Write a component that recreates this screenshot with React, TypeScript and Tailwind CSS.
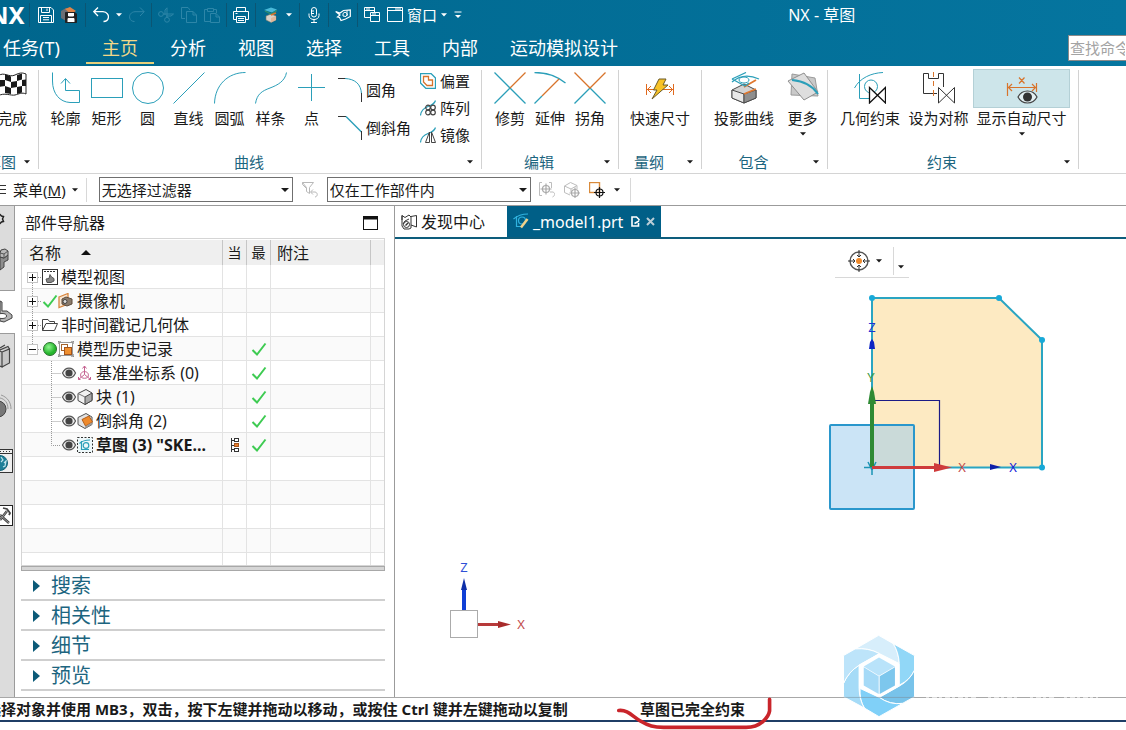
import React from 'react';

type Kids = { children?: React.ReactNode };

const Caret = ({ className = '', big }: { className?: string; big?: boolean }) => (
  <svg className={`shrink-0 ${className}`} width={big ? 8 : 6} height="4" viewBox={big ? '0 0 8 4' : '0 0 6 4'} fill="currentColor" aria-hidden="true">
    <path d={big ? 'M0 0H8L4 4Z' : 'M0 0.3H6L3 3.6Z'} />
  </svg>
);

const Ico = ({ s = 16, w, h, vb, children, className = '' }: Kids & { s?: number; w?: number; h?: number; vb?: string; className?: string }) => (
  <svg
    className={`shrink-0 ${className}`}
    width={w ?? s}
    height={h ?? s}
    viewBox={vb ?? `0 0 ${w ?? s} ${h ?? s}`}
    fill="none"
    stroke="currentColor"
    strokeWidth="1"
    aria-hidden="true"
  >
    {children}
  </svg>
);

const CYAN = '#2b9fb9';
const ORANGE = '#d8742c';

/* ---------- title bar ---------- */

const TitleGroup = ({ w, children, last }: Kids & { w: string; last?: boolean }) => (
  <div className={`flex h-6 items-center justify-center gap-[7px] ${w} ${last ? '' : 'border-r border-[#0b5573]'}`}>{children}</div>
);

const TB = ({ label, children, off }: Kids & { label: string; off?: boolean }) => (
  <button type="button" aria-label={label} disabled={off} className={`flex items-center ${off ? 'text-[#2d86a8]' : 'text-white'}`}>
    {children}
  </button>
);

function TitleBar() {
  return (
    <div className="flex h-8 items-center pb-[2px]">
      <div className="flex w-[70%] items-center">
        <div className="flex w-[30px] items-center overflow-hidden border-r border-[#0b5573]">
          <span className="-ml-[11px] text-[24px] leading-6 font-bold">NX</span>
        </div>
        <TitleGroup w="w-[56px]">
          <TB label="保存">
            <Ico>
              <path d="M0.5 0.5H13L15.5 3V15.5H0.5ZM3.5 0.5V5.5H11.5V0.5M9 1.5V4M2.5 15V8.5H13.5V15M5 10.5H11M5 12.8H11" />
            </Ico>
          </TB>
          <TB label="全部保存">
            <Ico>
              <path d="M0 4L5 1L10 3V12L5 14L0 11Z" fill="#6b6f75" stroke="none" />
              <path d="M4 2L9 0L15 4L10 7Z" fill="#e08447" stroke="none" />
              <path d="M4.5 5.5H14L15.5 7V15.5H4.5Z" fill="#222" stroke="#222" />
              <path d="M7.5 6V9H12.5V6M7 15V11.5H13V15" fill="#fff" stroke="#fff" />
            </Ico>
          </TB>
        </TitleGroup>
        <TitleGroup w="w-[66px]">
          <TB label="撤销">
            <Ico>
              <path d="M5 0.5L0.8 4.7L5 9M1 4.7H10C14 5 16 8 15.3 11C14.8 13.3 13 14.5 10.5 14.5" strokeWidth="1.3" />
            </Ico>
          </TB>
          <TB label="撤销列表">
            <Caret />
          </TB>
          <TB label="重做" off>
            <Ico>
              <path d="M11 0.5L15.2 4.7L11 9M15 4.7H6C2 5 0 8 0.7 11C1.2 13.3 3 14.5 5.5 14.5" />
            </Ico>
          </TB>
        </TitleGroup>
        <TitleGroup w="w-[75px]">
          <TB label="剪切" off>
            <Ico>
              <circle cx="3" cy="7" r="2.4" />
              <circle cx="9" cy="12.8" r="2.4" />
              <path d="M5.5 7H15.5L13 9H8M9 10.4V0.8L7 3V8" />
            </Ico>
          </TB>
          <TB label="复制" off>
            <Ico>
              <path d="M4 11.5H0.5V0.5H7L9 3M5.5 4.5H12L15.5 8V15.5H5.5ZM12 4.5V8H15.5" />
            </Ico>
          </TB>
          <TB label="粘贴" off>
            <Ico>
              <path d="M6 14.5H0.5V2.5H3.5M9.5 2.5H12.5V6M3.5 1.5H9.5V4.5H3.5ZM6.5 6.5H12L15.5 10V15.5H6.5ZM12 6.5V10H15.5" />
            </Ico>
          </TB>
        </TitleGroup>
        <TitleGroup w="w-[29px]">
          <TB label="打印">
            <Ico>
              <path d="M3.5 4V0.5H12.5V4M3 12.5H0.5V4.5H15.5V12.5H13M3.5 9.5H12.5V15.5H3.5ZM2.5 6.5H4.5M5 11.5H11M5 13.5H11" />
            </Ico>
          </TB>
        </TitleGroup>
        <TitleGroup w="w-[44px]">
          <TB label="命令查找">
            <Ico>
              <path d="M3 9L8 7L13 9V13L8 15.5L3 13Z" fill="#d9d2c8" stroke="#776" strokeWidth="0.6" />
              <path d="M8 11L13 9V13L8 15.5Z" fill="#e0b79a" stroke="none" />
              <path d="M1 3L8 0.5L14 2.5L9 5.5Z" fill="#49b9d8" stroke="none" />
              <path d="M2 4L8 7L14 3.5" stroke="#2d8f6f" strokeWidth="1.3" />
              <path d="M8 8L13 6" stroke="#d8742c" strokeWidth="1.6" />
            </Ico>
          </TB>
          <TB label="更多命令">
            <Caret />
          </TB>
        </TitleGroup>
        <TitleGroup w="w-[29px]">
          <TB label="语音">
            <Ico>
              <rect x="5.5" y="0.5" width="5" height="9.5" rx="2.5" />
              <path d="M3 6.5V8.5C3 11 5.2 12.5 8 12.5S13 11 13 8.5V6.5M8 12.5V15.5M5 15.5H11M5.5 4H8M5.5 6.5H8" />
            </Ico>
          </TB>
        </TitleGroup>
        <TitleGroup w="w-[29px]">
          <TB label="触控">
            <Ico>
              <path d="M0.7 4.5L5 6L8.500 3.500L15.300 2.800V9.500L10.500 12L6 13.500L4.500 10.500L2.500 10L5 8Z" strokeWidth="1.200" />
              <path d="M8 6.500L10 5L12.500 7L11 9.500L8 9ZM12 3V9" />
            </Ico>
          </TB>
        </TitleGroup>
        <div className="flex items-center gap-[7px] pl-[6px]">
          <TB label="切换窗口">
            <Ico>
              <path d="M6 10.5H0.5V0.5H10.5V5M0.5 3.5H10.5M2 2H6M6.5 5.5H15.5V14.5H6.5ZM6.5 8.5H15.5M8 7H12" />
            </Ico>
          </TB>
          <button type="button" className="flex items-center gap-1 text-[15px] leading-5">
            <Ico>
              <path d="M0.5 0.5H15.5V14.5H0.5ZM0.5 3.5H15.5M8 2H14" />
            </Ico>
            窗口
            <Caret />
          </button>
          <TB label="自定义工具条">
            <Ico w={8} h={8}>
              <path d="M0.5 1H7.5" />
              <path d="M1 4H7L4 7Z" fill="currentColor" stroke="none" />
            </Ico>
          </TB>
        </div>
      </div>
      <h1 className="text-[16px] leading-6">NX - 草图</h1>
    </div>
  );
}

const TABS = ['主页', '分析', '视图', '选择', '工具', '内部', '运动模拟设计'];

function MenuTabs() {
  return (
    <div className="flex h-[34px] items-start justify-between">
      <nav className="flex text-[18px] leading-8">
        <a href="#task" className="w-[86px] pl-[3px]">任务(T)</a>
        {TABS.map((t, i) => (
          <a
            key={t}
            href={`#tab${i}`}
            className={`h-8 border-b-2 px-4 ${i === 0 ? 'border-[#e8cf7a] text-[#f2d888]' : 'border-transparent'}`}
          >
            {t}
          </a>
        ))}
      </nav>
      <input
        aria-label="查找命令"
        placeholder="查找命令"
        className="mt-[3px] h-[26px] w-[58px] border border-r-0 border-[#8a8a8a] bg-white px-px text-[15px] text-black placeholder:text-[#a3a3a3]"
      />
    </div>
  );
}

/* ---------- ribbon ---------- */

const Tool = ({ label, w, children, drop, on }: Kids & { label: string; w: string; drop?: boolean; on?: boolean }) => (
  <button type="button" aria-pressed={on} className={`flex flex-col items-center ${w}`}>
    <span className={`flex h-[39px] w-full items-start justify-center ${on ? 'border border-[#b4d0d6] bg-[#cde5ea] pt-[2px]' : 'pt-[3px]'}`}>{children}</span>
    <span className="text-[15px] leading-5 whitespace-nowrap">{label}</span>
    {drop && <Caret className="mt-1" />}
  </button>
);

const Group = ({ name, children, pad = 'px-2' }: Kids & { name: string; pad?: string }) => (
  <section className="flex flex-col">
    <div className={`flex h-[83px] items-start ${pad}`}>{children}</div>
    <div className="flex h-5 items-center text-[15px] leading-5">
      <span className="flex-1 text-center text-[#1c6580]">{name}</span>
      <button type="button" aria-label={`${name}选项`} className="flex w-[22px] justify-center">
        <Caret />
      </button>
    </div>
  </section>
);

const Sep = () => <div className="mt-px mb-[3px] w-px shrink-0 bg-[#d2d2d2]" />;

const SmallTool = ({ label, h, children }: Kids & { label: string; h: string }) => (
  <button type="button" className={`flex items-center gap-1 text-[15px] leading-5 ${h}`}>
    {children}
    {label}
  </button>
);

function Ribbon() {
  return (
    <div className="flex shrink-0 overflow-hidden border-b border-[#d4d4d4] bg-white pt-[3px] pb-px">
      <section className="flex w-[38px] shrink-0 flex-col items-end overflow-hidden">
        <div className="flex h-[83px] pr-[11px]">
          <Tool label="完成" w="w-[30px]">
            <Ico w={30} h={26}>
              <path d="M1 4C7 -1 12 6 18 3S26 1 29 2V22C25 20 22 22 18 23S7 20 1 24Z" fill="#fff" stroke="#222" />
              <path d="M8 2L14 4.5V10L8 8ZM20 3L25 1.5V7.5L20 9ZM2 8L8 8V14L2 15ZM14 10L20 9V15L14 16ZM25 8L29 7.5V14L25 14ZM8 14L14 16V22L8 21ZM20 15L25 14V20.5L20 22Z" fill="#1a1a1a" stroke="none" />
            </Ico>
          </Tool>
        </div>
        <div className="flex h-5 items-center text-[15px] leading-5 whitespace-nowrap">
          <span className="text-[#1c6580]">草图</span>
          <button type="button" aria-label="草图选项" className="flex w-[22px] justify-center">
            <Caret />
          </button>
        </div>
      </section>
      <Sep />
      <Group name="曲线" pad="pl-[6px] pr-[11px]">
        <Tool label="轮廓" w="w-[41px]">
          <Ico s={32} className="text-[#2b9fb9]">
            <path d="M2.5 0.5V9C2.5 22 10 30 20 30.5H29.5V18.5H15.5V7M11 11.5L15.5 6.5L20 11.5" />
          </Ico>
        </Tool>
        <Tool label="矩形" w="w-[41px]">
          <Ico s={32} className="text-[#2b9fb9]">
            <rect x="0.5" y="6.5" width="31" height="19" />
          </Ico>
        </Tool>
        <Tool label="圆" w="w-[41px]">
          <Ico s={32} className="text-[#2b9fb9]">
            <circle cx="16" cy="16" r="15.5" />
          </Ico>
        </Tool>
        <Tool label="直线" w="w-[41px]">
          <Ico s={32} className="text-[#2b9fb9]">
            <path d="M0.5 31.5L31.5 0.5" />
          </Ico>
        </Tool>
        <Tool label="圆弧" w="w-[41px]">
          <Ico s={32} className="text-[#2b9fb9]">
            <path d="M0.5 31.5C1 13 14 0.5 31.5 0.5" />
          </Ico>
        </Tool>
        <Tool label="样条" w="w-[41px]">
          <Ico s={32} className="text-[#2b9fb9]">
            <path d="M0.5 31.5C2 22 7 19 15 16S30 9 31.5 0.5" />
          </Ico>
        </Tool>
        <Tool label="点" w="w-[41px]">
          <Ico s={32} className="text-[#2b9fb9]">
            <path d="M15.5 2V29M2 15.5H29" />
          </Ico>
        </Tool>
        <div className="ml-[6px] flex flex-col pt-[2px]">
          <SmallTool label="圆角" h="h-[38px]">
            <Ico s={24}>
              <path d="M0 0.5H8" stroke="#333" />
              <path d="M7 0.5C17 1 23 6 23.5 16" stroke={CYAN} />
              <path d="M23.5 15V24" stroke="#333" />
            </Ico>
          </SmallTool>
          <SmallTool label="倒斜角" h="h-[38px]">
            <Ico s={24}>
              <path d="M0 0.5H8" stroke="#333" />
              <path d="M8 0.5L23.5 16" stroke={CYAN} strokeWidth="1.4" />
              <path d="M23.5 15V24" stroke="#333" />
            </Ico>
          </SmallTool>
        </div>
        <div className="ml-[9px] flex flex-col">
          <SmallTool label="偏置" h="h-6">
            <Ico>
              <path d="M0.5 0.5H11L15.5 5V15.5H6L0.5 10Z" stroke={CYAN} strokeWidth="1.3" />
              <path d="M3.5 3.5H8.5V7H12.5V12.5H7L3.5 9Z" stroke={ORANGE} strokeWidth="1.3" />
            </Ico>
          </SmallTool>
          <SmallTool label="阵列" h="h-[29px]">
            <Ico>
              <path d="M0.5 15.5C1 10 4 8 8 6.500S14.5 4 15.5 0.5" stroke={CYAN} strokeWidth="1.2" />
              <g stroke="#444" strokeWidth="1.2">
                <circle cx="8" cy="7.500" r="2.300" />
                <circle cx="13" cy="7.500" r="2.300" />
                <circle cx="8" cy="12.500" r="2.300" />
                <circle cx="13" cy="12.500" r="2.300" />
              </g>
            </Ico>
          </SmallTool>
          <SmallTool label="镜像" h="h-[26px]">
            <Ico>
              <path d="M0.5 15.5C1 10 4 8 8 6.500S14.5 4 15.5 0.5" stroke={CYAN} strokeWidth="1.2" />
              <path d="M9.5 5V15.5H5.5ZM11.5 5V15.5H15.5Z" stroke="#444" />
            </Ico>
          </SmallTool>
        </div>
      </Group>
      <Sep />
      <Group name="编辑">
        <Tool label="修剪" w="w-10">
          <Ico s={32} className="text-[#2b9fb9]">
            <path d="M0.5 0.5L31.5 31.5M0.5 31.5L16 16" strokeWidth="1.3" />
            <path d="M16 16L31.5 0.5" stroke={ORANGE} strokeWidth="1.3" />
          </Ico>
        </Tool>
        <Tool label="延伸" w="w-10">
          <Ico s={32} className="text-[#2b9fb9]">
            <path d="M0.5 0.5C12 0.5 22 3 31.5 11M0.5 31.5L8 24" strokeWidth="1.3" />
            <path d="M8 24L25 7" stroke={ORANGE} strokeWidth="1.3" />
          </Ico>
        </Tool>
        <Tool label="拐角" w="w-10">
          <Ico s={32} className="text-[#2b9fb9]">
            <path d="M0.5 31.5L16 16L31.5 31.5" strokeWidth="1.3" />
            <path d="M0.5 0.5L16 16L31.5 0.5" stroke={ORANGE} strokeWidth="1.3" />
          </Ico>
        </Tool>
      </Group>
      <Sep />
      <Group name="量纲">
        <Tool label="快速尺寸" w="w-[66px]">
          <Ico s={32}>
            <path d="M2.5 12V23M29.5 12V23M3 17.5H29M7 14L3.5 17.5L7 21M25 14L28.5 17.5L25 21" stroke="#e06a1f" />
            <path d="M15 7H22L19 13H24L8 27L13 18H9.5Z" fill="#f8c327" stroke="#6b5a2a" />
          </Ico>
        </Tool>
      </Group>
      <Sep />
      <Group name="包含" pad="pl-2">
        <Tool label="投影曲线" w="w-[68px]">
          <Ico s={32}>
            <path d="M4 18L16 12L28 18V26L16 31L4 26Z" fill="#d3d3d3" stroke="#4b4b4b" />
            <path d="M4 18L16 22V31L4 26Z" fill="#e8e8e8" stroke="#4b4b4b" />
            <path d="M16 22L28 18V26L16 31Z" fill="#8e8e8e" stroke="#4b4b4b" />
            <path d="M28 8L16 15M16 22L28 17" stroke="#e0782f" strokeWidth="1.8" />
            <path d="M4 7L18 0.5M4 7L17 14L21 11M4 10C12 3 20 2 31 7" stroke={CYAN} strokeWidth="1.3" />
            <ellipse cx="16" cy="8" rx="5" ry="3" stroke={CYAN} />
          </Ico>
        </Tool>
        <Tool label="更多" w="w-[49px]" drop>
          <Ico s={32}>
            <path d="M5 2L28 6L31 24L4 23Z" fill="#c9c9c9" stroke="#9a9a9a" />
            <path d="M1 9L17 1L31 20L17 28Z" fill="#dedede" stroke="#8f8f8f" />
            <path d="M5 8C16 9 25 13 31 22" stroke={CYAN} strokeWidth="2" />
          </Ico>
        </Tool>
      </Group>
      <Sep />
      <Group name="约束">
        <Tool label="几何约束" w="w-[68px]">
          <Ico s={32}>
            <path d="M5.5 2V26.5H15M0.5 16C6 6 17 1 29 0.5" stroke={CYAN} />
            <circle cx="17" cy="14.5" r="6.5" stroke={CYAN} />
            <path d="M15.5 15.5L31.5 31V15.5L15.5 31Z" fill="#fff" stroke="#111" strokeWidth="1.3" />
          </Ico>
        </Tool>
        <Tool label="设为对称" w="w-[69px]">
          <Ico s={32}>
            <path d="M14 21.5H0.5V1.5H5.5V6.5H15.5V1.5H20.5V15" stroke="#333" />
            <path d="M10.5 0V5M10.5 9V14M10.5 18V24" stroke={ORANGE} />
            <path d="M15.5 15.5L31.5 31V15.5L15.5 31Z" fill="#fff" stroke="#333" />
          </Ico>
        </Tool>
        <Tool label="显示自动尺寸" w="w-[97px]" drop on>
          <Ico s={32}>
            <path d="M1.5 11V24M30.5 11V20M2 15.5H30M6 12L2.5 15.5L6 19M26 12L29.5 15.5L26 19M13 5.500L18.5 11.500M18.5 5.500L13 11.500" stroke={ORANGE} strokeWidth="1.2" />
            <path d="M12 25C16 17 27 17 31 25C27 33 16 33 12 25Z" fill="#e3eff2" stroke="#444" strokeWidth="1.2" />
            <circle cx="21.5" cy="25" r="4.5" fill="#333" stroke="none" />
          </Ico>
        </Tool>
      </Group>
      <Sep />
    </div>
  );
}

/* ---------- selection bar ---------- */

const Picker = ({ label, value, w }: { label: string; value: string; w: string }) => (
  <div className={`relative h-[25px] shrink-0 ${w}`}>
    <select aria-label={label} className="h-full w-full appearance-none border border-[#6f6f6f] bg-white pl-[2px] text-[15px] leading-5">
      <option>{value}</option>
    </select>
    <Caret big className="pointer-events-none absolute top-[11px] right-1" />
  </div>
);

const Cross = ({ x, y, c }: { x: number; y: number; c: string }) => (
  <g transform={`translate(${x} ${y})`} stroke={c} strokeWidth="1.2">
    <circle r="3.5" />
    <path d="M-5.5 0H5.5M0 -5.5V5.5" />
  </g>
);

function SelectionBar() {
  return (
    <div className="flex h-8 shrink-0 items-center overflow-hidden border-b border-[#9b9b9b]">
      <button type="button" className="flex items-center text-[15px] leading-5">
        <Ico w={7} h={10}>
          <path d="M0 0.5H6M0 4.5H6M0 8.5H6" stroke="#333" />
        </Ico>
        <span className="ml-[6px]">菜单(<u>M</u>)</span>
        <Caret className="ml-[6px]" />
      </button>
      <div className="ml-2 h-6 w-px bg-[#d8d8d8]" />
      <div className="ml-3 flex items-center">
        <Picker label="类型过滤器" value="无选择过滤器" w="w-[194px]" />
        <Ico className="mx-[9px] text-[#b8b8b8]">
          <path d="M0.5 0.5H11.5L7.5 5.5V11.5L4.5 9.5V5.5ZM0.5 0.5V2.5L4.5 6.5M9 10H13C16 10.5 16 14.5 13 15M11 7.5L8.5 10L11 12.5" />
        </Ico>
        <Picker label="选择范围" value="仅在工作部件内" w="w-[204px]" />
      </div>
      <div className="ml-2 flex items-center gap-[9px]">
        <Ico s={16}>
          <path d="M3 0.5H0.5V13.5H3M10 0.5H12.5V6M11 10H14C16.5 11 16 14 13.5 15" stroke="#bdbdbd" />
          <Cross x={7} y={7} c="#a9a9a9" />
        </Ico>
        <Ico s={16}>
          <path d="M0.5 4L6.5 0.5L13 3.5V7M0.5 4V10.5L6 13M0.5 4L7 7L13 3.5M7 7V10" stroke="#bdbdbd" />
          <Cross x={11} y={11} c="#a9a9a9" />
        </Ico>
        <Ico s={16}>
          <rect x="0.5" y="0.5" width="10" height="10" stroke="#d98a3a" strokeWidth="1.4" />
          <Cross x={10.5} y={10.5} c="#111" />
        </Ico>
        <Caret />
      </div>
      <div className="ml-[10px] h-6 w-px bg-[#d8d8d8]" />
    </div>
  );
}

/* ---------- resource rail ---------- */

const RailBtn = ({ label, h, children, on }: Kids & { label: string; h: string; on?: boolean }) => (
  <button
    type="button"
    aria-label={label}
    className={`flex w-[15px] shrink-0 items-center ${h} ${on ? 'border-y border-[#9b9b9b] bg-white' : 'border-r border-[#9b9b9b]'}`}
  >
    {children}
  </button>
);

function Rail() {
  return (
    <div className="flex w-[15px] shrink-0 flex-col overflow-hidden bg-[#dcdcdc]">
      <RailBtn label="设置" h="h-[26px]">
        <Ico w={14} h={14}>
          <path d="M-4 3L-1 2.5L0 2.500L1.500 4L3.500 4.500L2.500 7L3.500 9.500L1.500 10L0 11.500L-1 11.5" stroke="#222" strokeWidth="1.5" />
        </Ico>
      </RailBtn>
      <RailBtn label="装配导航器" h="h-[58px]">
        <Ico w={14} h={26}>
          <path d="M0 9L4 10L8 7V12L4 14V19L0 22Z" fill="#8d8d8d" stroke="#444" />
          <path d="M0 5L1 2L5 1L8 3V7L4 10L0 9Z" fill="#b9b9b9" stroke="#444" />
          <path d="M0 5L4 6L8 3M4 6V10" stroke="#555" />
        </Ico>
      </RailBtn>
      <RailBtn label="部件导航器" h="h-[44px]" on>
        <Ico w={14} h={26}>
          <path d="M0 2L2 3V12L7 12L12 16V19L4 23L0 22Z" fill="#b3b3b3" stroke="#444" />
          <ellipse cx="2" cy="17" rx="4.5" ry="2.500" fill="#fff" stroke="#444" />
        </Ico>
      </RailBtn>
      <RailBtn label="重用库" h="h-[43px]">
        <Ico w={14} h={26}>
          <path d="M0 8L2 9V24L0 23M2 9L9.500 6V20L2 24M0 5L5 2M0 7L8 3.500L9.500 6" fill="#c6c6c6" stroke="#444" strokeWidth="1.2" />
        </Ico>
      </RailBtn>
      <RailBtn label="HD3D 工具" h="h-[60px]">
        <Ico w={14} h={26}>
          <circle cx="-2" cy="15" r="8" fill="#777" stroke="#444" />
          <path d="M0 4C5 5 8 9 8 15M1 1C7 3 11 8 11 15" stroke="#999" />
        </Ico>
      </RailBtn>
      <RailBtn label="Web 浏览器" h="h-[48px]">
        <Ico w={14} h={24}>
          <rect x="-6" y="0.5" width="18.5" height="23" fill="#efefef" stroke="#333" />
          <path d="M0 4.5H12" stroke="#333" />
          <path d="M0 2.5H10" stroke="#333" strokeDasharray="1 2" />
          <circle cx="0" cy="14" r="7.5" fill="#1e7f98" stroke="#146378" />
          <path d="M1 8L3 11L1 13M4 14L6 12L5 17L3 18" stroke="#bfe3ec" strokeWidth="1.2" />
        </Ico>
      </RailBtn>
      <RailBtn label="工艺模板" h="h-[62px]">
        <Ico w={14} h={22}>
          <rect x="-6" y="0.5" width="18.5" height="20" fill="#fff" stroke="#222" />
          <path d="M0 10L9 18M7 6L0 15" stroke="#444" strokeWidth="2.500" />
          <path d="M0 10L9 18M7 6L0 15" stroke="#aaa" strokeWidth="0.800" />
          <path d="M3 3L7 4L10 8L9 10" stroke="#444" strokeWidth="1.8" />
        </Ico>
      </RailBtn>
      <div className="flex-1 border-r border-[#9b9b9b]" />
    </div>
  );
}

/* ---------- part navigator ---------- */

const Eye = () => (
  <Ico>
    <path d="M1.500 8C4.500 1.500 11.500 1.500 14.500 8C11.500 14.500 4.500 14.500 1.500 8Z" fill="#eee" stroke="#555" strokeWidth="1.2" />
    <circle cx="8" cy="8" r="3.6" fill="#444" stroke="none" />
  </Ico>
);

const Check = () => (
  <Ico className="text-[#3ecb52]">
    <path d="M1.5 9L6 13.5L14.5 2.5" strokeWidth="2" />
  </Ico>
);

type Guide = 'first' | 'mid' | 'open' | 'child' | 'last';

const TreeGuide = ({ kind }: { kind: Guide }) => {
  if (kind === 'child' || kind === 'last') {
    return (
      <Ico w={39} h={24} className="text-[#9a9a9a]">
        <path d={kind === 'last' ? 'M29.5 0V12.5H39' : 'M29.5 0V24M29.5 12.5H39'} strokeDasharray="1 1" />
      </Ico>
    );
  }
  return (
    <Ico w={20} h={24} className="text-[#9a9a9a]">
      <path d={kind === 'first' ? 'M10.5 18V24M16 12.5H20' : kind === 'mid' ? 'M10.5 0V24M16 12.5H20' : 'M10.5 0V7M16 12.5H20'} strokeDasharray="1 1" />
      <rect x="5.5" y="7.5" width="10" height="10" fill="#fff" stroke="#c4c4c4" />
      <path d={kind === 'open' ? 'M7 12.5H14' : 'M7 12.5H14M10.5 9V16'} stroke="#111" />
    </Ico>
  );
};

type Row = { guide: Guide; icons: React.ReactNode; text: string; bold?: boolean; checked?: boolean; flag?: boolean };

const ROWS: Row[] = [
  {
    guide: 'first',
    text: '模型视图',
    icons: (
      <Ico>
        <rect x="0.5" y="0.5" width="15" height="15" fill="#fff" stroke="#333" />
        <path d="M2 2.5H14" stroke="#333" strokeDasharray="2 1" />
        <path d="M4 10L7 9.500L8 5.500L9.500 8L12 9.500V12L9 13.500H5Z" fill="#888" stroke="#555" />
      </Ico>
    ),
  },
  {
    guide: 'mid',
    text: '摄像机',
    icons: (
      <>
        <Check />
        <Ico>
          <path d="M1 4L10 0.5V11L1 14.5Z" fill="#f8e6d2" stroke="#d8863f" strokeWidth="1.3" />
          <path d="M4 6L8 4L14 6V11L9 13L4 11Z" fill="#8a7b6c" stroke="#5c4a3a" />
          <circle cx="7" cy="8.5" r="2" fill="#ddd" stroke="#444" />
        </Ico>
      </>
    ),
  },
  {
    guide: 'mid',
    text: '非时间戳记几何体',
    icons: (
      <Ico>
        <path d="M0.5 13.5V2.5H6L7.5 4.5H12.5V6.5M0.5 13.5L4 6.5H15.5L12.5 13.5Z" stroke="#444" />
      </Ico>
    ),
  },
  {
    guide: 'open',
    text: '模型历史记录',
    checked: true,
    icons: (
      <>
        <Ico>
          <defs>
            <radialGradient id="ball" cx="40%" cy="35%">
              <stop offset="0" stopColor="#8ff58f" />
              <stop offset="1" stopColor="#25b52c" />
            </radialGradient>
          </defs>
          <circle cx="8" cy="8" r="6.5" fill="url(#ball)" stroke="#2a6e2e" />
        </Ico>
        <Ico>
          <rect x="1.5" y="1.5" width="13" height="13" fill="#fff" stroke="#999" />
          <path d="M0 0H3M0 0V3M13 0H16V3M0 13V16H3M16 13V16H13" stroke="#666" />
          <rect x="3.5" y="3.5" width="6" height="6" fill="#fff" stroke="#a5622a" />
          <rect x="6.5" y="6.5" width="7" height="7" fill="#ef8f2f" stroke="#a5541b" />
        </Ico>
      </>
    ),
  },
  {
    guide: 'child',
    text: '基准坐标系 (0)',
    checked: true,
    icons: (
      <>
        <Eye />
        <Ico className="text-[#c4608f]">
          <path d="M7.5 1V9.5L1.5 14.5M7.5 9.5L13.5 14.5M5.5 3.5L7.5 1L9.5 3.5M3.5 14.5H1.5V12M11.5 14.5H13.5V12M4 12C3 9 4 7 7.5 6.5C11 7 12 9 11 12M4.5 12.5C6 13.5 9 13.5 10.5 12.5" />
        </Ico>
      </>
    ),
  },
  {
    guide: 'child',
    text: '块 (1)',
    checked: true,
    icons: (
      <>
        <Eye />
        <Ico>
          <path d="M1 4.5L9 0.5L15 4V11.5L8 15.5L1 11.5Z" fill="#f1f1f1" stroke="#444" />
          <path d="M8 8L15 4V11.5L8 15.5Z" fill="#a9a9a9" stroke="#444" />
          <path d="M1 4.5L8 8" stroke="#777" />
        </Ico>
      </>
    ),
  },
  {
    guide: 'child',
    text: '倒斜角 (2)',
    checked: true,
    icons: (
      <>
        <Eye />
        <Ico>
          <path d="M1 4.5L9 0.5L15 4V11.5L8 15.5L1 11.5Z" fill="#e3e3e3" stroke="#555" />
          <path d="M5 6.500L12 3L15.500 9L8.500 13Z" fill="#ee8a2c" stroke="#b5601c" />
          <path d="M8 13.5L15 9.500V11.5L8 15.5Z" fill="#999" stroke="none" />
        </Ico>
      </>
    ),
  },
  {
    guide: 'last',
    text: '草图 (3) "SKE...',
    bold: true,
    checked: true,
    flag: true,
    icons: (
      <>
        <Eye />
        <Ico>
          <rect x="0.5" y="0.5" width="15" height="15" fill="#eef8fa" stroke="#333" strokeDasharray="2 1.5" />
          <path d="M4.5 4V12.5H12M2.5 6.5C5 4 9 3 13 3" stroke={CYAN} strokeWidth="1.2" />
          <circle cx="9" cy="8.5" r="2.8" stroke={CYAN} strokeWidth="1.2" />
        </Ico>
      </>
    ),
  },
];

const BLANKS = Array.from({ length: 12 }, (_, i) => i);
const CELL = 'border-r border-b border-[#e3e3e3] p-0';
const HEAD = 'border-r border-[#c6c6c6] p-0 font-normal';

function Navigator() {
  return (
    <aside className="flex w-[380px] shrink-0 flex-col border-r border-[#9b9b9b] bg-white pr-[9px] pb-[6px] pl-[6px]">
      <div className="flex h-8 shrink-0 items-center justify-between pt-px pr-[7px] pl-1">
        <h2 className="text-[16px] leading-6">部件导航器</h2>
        <button type="button" aria-label="最大化">
          <Ico w={15} h={14}>
            <rect x="0.5" y="0.5" width="14" height="13" stroke="#111" />
            <path d="M0 2H15" stroke="#111" strokeWidth="3" />
          </Ico>
        </button>
      </div>
      <div className="min-h-0 flex-1 overflow-hidden border border-[#d5d5d5] pt-px">
        <table className="w-full table-fixed border-separate border-spacing-0 text-[16px] leading-6">
          <colgroup>
            <col className="w-[201px]" />
            <col className="w-6" />
            <col className="w-6" />
            <col className="w-[100px]" />
            <col />
          </colgroup>
          <thead>
            <tr className="h-[25px] bg-[#efefef] text-left">
              <th className={HEAD}>
                <span className="flex items-center gap-5 pl-[7px]">
                  名称
                  <Ico w={10} h={5}>
                    <path d="M0 5H10L5 0Z" fill="#111" stroke="none" />
                  </Ico>
                </span>
              </th>
              <th className={`${HEAD} text-center text-[14px]`}>当</th>
              <th className={`${HEAD} text-center text-[14px]`}>最</th>
              <th className={HEAD}>
                <span className="pl-[6px]">附注</span>
              </th>
              <th className="p-0" />
            </tr>
          </thead>
          <tbody>
            {ROWS.map((r) => (
              <tr key={r.text} className="h-6 even:bg-[#fafafa]">
                <td className={CELL}>
                  <div className={`flex h-[23px] items-center overflow-hidden whitespace-nowrap ${r.bold ? 'font-bold' : ''}`}>
                    <TreeGuide kind={r.guide} />
                    {r.icons}
                    <span className="pl-[3px]">{r.text}</span>
                  </div>
                </td>
                <td className={CELL}>
                  {r.flag && (
                    <Ico w={10} h={14} className="ml-2">
                      <path d="M0.5 0V14M0.5 2.5H3M0.5 7.5H3M0.5 11.5H3" stroke="#333" />
                      <rect x="3.5" y="0.5" width="4" height="3" fill="#fff" stroke="#333" />
                      <rect x="3.5" y="5.5" width="4" height="3" fill="#e67e2c" stroke="#a5541b" />
                      <rect x="3.5" y="10.5" width="4" height="3" fill="#fff" stroke="#333" />
                    </Ico>
                  )}
                </td>
                <td className={CELL}>
                  {r.checked && (
                    <span className="flex justify-center">
                      <Check />
                    </span>
                  )}
                </td>
                <td className={CELL} />
                <td className="border-b border-[#e3e3e3] p-0" />
              </tr>
            ))}
            {BLANKS.map((i) => (
              <tr key={i} className="h-6 even:bg-[#fafafa]">
                <td className={CELL} />
                <td className={CELL} />
                <td className={CELL} />
                <td className={CELL} />
                <td className="border-b border-[#e3e3e3] p-0" />
              </tr>
            ))}
          </tbody>
        </table>
      </div>
      <div className="h-[5px] shrink-0 border border-[#a8a8a8] bg-[#d6d6d6]" />
      {['搜索', '相关性', '细节', '预览'].map((t) => (
        <button key={t} type="button" className="flex h-[30px] shrink-0 items-center gap-[11px] border-b-2 border-[#cfcfcf] pt-[2px] pl-3 text-left text-[20px] leading-7 text-[#1c6580]">
          <Ico w={7} h={12}>
            <path d="M0 0V12L7 6Z" fill="#0c5a78" stroke="none" />
          </Ico>
          {t}
        </button>
      ))}
    </aside>
  );
}

/* ---------- graphics area ---------- */

function DocTabs() {
  return (
    <div className="flex h-[33px] shrink-0 border-b-2 border-[#0d5d7c] text-[16px] leading-6">
      <button type="button" className="flex w-[112px] items-center gap-[3px] pl-[6px] whitespace-nowrap">
        <Ico w={17} h={16}>
          <path d="M1 1.500L4 3.500L8 1L10 3V14L8 15H3L1 12ZM10 2.500L15.500 1.500V13L10 11M1 1.500V6M8 5L4 7L2 10" stroke="#333" />
          <circle cx="5.5" cy="10.5" r="3" stroke="#333" />
          <path d="M4.500 11.500L7 9" stroke="#333" strokeWidth="1.500" />
        </Ico>
        发现中心
      </button>
      <div className="flex w-[154px] items-center bg-[#005f87] pl-[6px] text-white">
        <Ico w={17} h={17}>
          <path d="M3.5 3V13.5H10M0.5 6C5 2 9 1 15 1" stroke="#2fb3e0" strokeWidth="1.2" />
          <circle cx="9" cy="7.5" r="3.5" stroke="#2fb3e0" strokeWidth="1.2" />
          <path d="M14.5 6L8 14.5" stroke="#f0d28a" strokeWidth="2.5" />
        </Ico>
        <span className="ml-[3px]">_model1.prt</span>
        <div className="ml-auto flex items-center gap-[6px] pr-[6px]">
          <Ico w={9} h={11}>
            <path d="M7.500 7V10H1V1H5.500L8 3.500V4.500M3.500 7.500L8 5" strokeWidth="1.6" />
          </Ico>
          <button type="button" aria-label="关闭">
            <Ico w={9} h={9} className="text-[#b9cdd7]">
              <path d="M1 1L8 8M8 1L1 8" strokeWidth="2" />
            </Ico>
          </button>
        </div>
      </div>
    </div>
  );
}

function SketchView() {
  return (
    <svg className="absolute inset-0 h-full w-full font-['Noto_Sans',sans-serif]" fill="none" role="img" aria-label="草图视图">
      <g transform="translate(-395 -239)">
        <path d="M872 298H999L1042 340V467H872Z" fill="#fdeac2" />
        <rect x="830" y="425" width="84" height="84" rx="1" fill="#9ccbee" fillOpacity="0.52" stroke="#2a97cc" strokeWidth="2" />
        <path d="M872 400.5H939.5V467" stroke="#1b1b86" strokeWidth="1.2" />
        <path d="M872 467V298H999L1042 340V467.5H872" stroke="#2aa5c2" strokeWidth="2" />
        <g fill="#18a9d8">
          <circle cx="872" cy="298" r="3" />
          <circle cx="999" cy="298" r="3" />
          <circle cx="1042" cy="340" r="3" />
          <circle cx="1042" cy="467.5" r="3" />
        </g>
        <path d="M869 349L870 342L872 339L874 342L875 349Z" fill="#0d24c4" />
        <path d="M990 464L1001 467L990 470Z" fill="#0d1fa8" />
        <path d="M864 467.5H880M872 461V475M868 462L872 470L876 462" stroke="#1d94b5" strokeWidth="1.5" />
        <path d="M872 467V400" stroke="#2f8a34" strokeWidth="4" />
        <path d="M868 404L870 392L872 386L874 392L876 404Z" fill="#2f8a34" />
        <path d="M872 467.5H936" stroke="#cf3b3b" strokeWidth="3" />
        <path d="M934 463L952 467.5L934 472Z" fill="#cf3b3b" />
        <g fontSize="13" textAnchor="middle">
          <text x="872" y="332" fill="#1c33d4">Z</text>
          <text x="871" y="382" fill="#3f9a45">Y</text>
          <text x="962" y="472" fill="#c24a4a">X</text>
          <text x="1013" y="472" fill="#1322d8">X</text>
          <text x="464" y="572" fill="#2e50d6">Z</text>
          <text x="521" y="629" fill="#c24a4a">X</text>
        </g>
        <path d="M464 611V588" stroke="#103fd6" strokeWidth="4" />
        <path d="M461 590L464 578L467 590Z" fill="#0e2fa8" />
        <path d="M478 624.5H500" stroke="#b73a3a" strokeWidth="3" />
        <path d="M498 621L511 624.5L498 628Z" fill="#a82c2c" />
        <rect x="450.5" y="610.5" width="27" height="27" fill="#fff" stroke="#ababab" />
      </g>
    </svg>
  );
}

function Graphics() {
  return (
    <main className="flex min-w-0 flex-1 flex-col">
      <DocTabs />
      <div className="relative flex-1 overflow-hidden">
        <SketchView />
        <div className="absolute top-[5px] left-[440px] flex h-[34px] w-[74px] items-center border-b border-[#d8d8d8] pl-[13px]">
          <Ico w={22} h={22}>
            <circle cx="11" cy="11" r="9" stroke="#555" strokeWidth="1.4" />
            <circle cx="11" cy="11" r="3" fill="#ee8a2c" stroke="none" />
            <path d="M11 0V7M11 15V22M0 11H7M15 11H22M9 5L11 7L13 5M9 17L11 15L13 17M5 9L7 11L5 13M17 9L15 11L17 13" stroke="#333" />
          </Ico>
          <Caret className="ml-[6px]" />
          <div className="ml-[11px] h-7 w-px bg-[#d8d8d8]" />
          <Caret className="mt-3 ml-1" />
        </div>
      </div>
    </main>
  );
}

function StatusBar() {
  return (
    <footer className="shrink-0 pb-2">
      <div className="flex h-[25px] items-center overflow-hidden border-t border-b-2 border-t-[#a8a8a8] border-b-[#1f3d66] pb-px text-[15px] leading-5 font-bold whitespace-nowrap">
        <p className="-ml-[14px] w-[654px] shrink-0">选择对象并使用 MB3，双击，按下左键并拖动以移动，或按住 Ctrl 键并左键拖动以复制</p>
        <p>草图已完全约束</p>
      </div>
    </footer>
  );
}

function Overlay() {
  return (
    <div className="pointer-events-none absolute inset-0">
      <svg className="absolute top-[635px] left-[843px] opacity-90" width="72" height="82" viewBox="69 44 216 247" aria-hidden="true">
        <g stroke="#fff" strokeWidth="3">
          <path d="M105 86L176 45L220 70Q236 95 238 130L178 100Q145 82 105 86Z" fill="#d3edfb" />
          <path d="M220 70L284 106V150Q270 180 238 195V130Q236 95 220 70Z" fill="#86d3f7" />
          <path d="M284 150V230L248 250Q210 255 178 232L238 198Q270 180 284 150Z" fill="#6abde8" />
          <path d="M248 250L177 290L133 264Q118 240 120 205L178 232Q210 255 248 250Z" fill="#73ccf8" />
          <path d="M133 264L70 230V190Q85 155 117 135V205Q118 240 133 264Z" fill="#9cd8f7" />
          <path d="M70 190V106L105 86Q145 82 178 100L117 135Q85 155 70 190Z" fill="#b6e2fa" />
        </g>
        <path d="M177 100L238 133V198L177 232L117 198V133Z" fill="#fff" />
        <path d="M177 112L225 139L177 167L131 139Z" fill="#b2e1fa" />
        <path d="M131 141L176 168V222L131 196Z" fill="#9cd6f7" />
        <path d="M225 141L179 168V222L225 196Z" fill="#70c1ec" />
        <path d="M70 232H284" stroke="#7f9aa8" strokeOpacity="0.6" strokeWidth="3" />
      </svg>
      <svg className="absolute top-[696px] left-[926px]" width="176" height="3" aria-hidden="true">
        <path d="M0 1.5H52M62 1.5H94M104 1.5H130M138 1.5H172" stroke="#fff" strokeOpacity="0.6" strokeWidth="2" strokeDasharray="3 3 5 2" />
      </svg>
      <svg className="absolute top-[697px] left-[616px]" width="158" height="33" viewBox="558 440 474 100" aria-hidden="true">
        <path d="M564 481C590 478 605 498 628 512C655 528 670 532 700 532H950C995 532 1018 500 1021 482V447" fill="none" stroke="#c9252b" strokeWidth="11" strokeLinecap="round" />
      </svg>
    </div>
  );
}

export default function App() {
  return (
    <div className="relative flex h-screen flex-col overflow-hidden bg-white font-['Noto_Sans','Noto_Sans_CJK_SC',sans-serif] text-[#1a1a1a]">
      <header className="shrink-0 bg-gradient-to-r from-[#00668d] to-[#05759f] text-white">
        <TitleBar />
        <MenuTabs />
      </header>
      <Ribbon />
      <SelectionBar />
      <div className="flex min-h-0 flex-1">
        <Rail />
        <Navigator />
        <Graphics />
      </div>
      <StatusBar />
      <Overlay />
    </div>
  );
}
